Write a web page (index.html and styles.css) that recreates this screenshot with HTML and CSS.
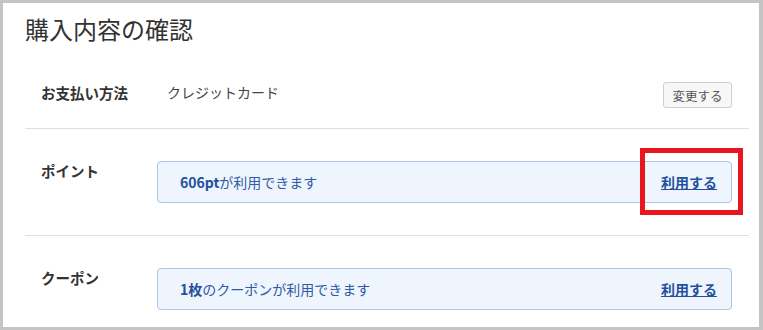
FILE: index.html
```html
<!DOCTYPE html>
<html lang="ja">
<head>
    <meta charset="UTF-8">
    <meta name="viewport" content="width=device-width, initial-scale=1.0">
    <title>購入内容の確認</title>
    <link rel="stylesheet" href="styles.css">
</head>
<body>
    <div class="panel">
        <h1 class="title">購入内容の確認</h1>

        <div class="row row-pay">
            <div class="label">お支払い方法</div>
            <div class="value">クレジットカード</div>
            <button class="btn-change" type="button">変更する</button>
        </div>

        <div class="row">
            <div class="label">ポイント</div>
            <div class="info-box">
                <span class="info-text"><b>606pt</b>が利用できます</span>
                <a href="#" class="use-link">利用する</a>
            </div>
        </div>

        <div class="row">
            <div class="label">クーポン</div>
            <div class="info-box">
                <span class="info-text"><b>1枚</b>のクーポンが利用できます</span>
                <a href="#" class="use-link">利用する</a>
            </div>
        </div>

        <!-- annotation around the point link -->
        <div class="highlight"></div>
    </div>
</body>
</html>
```

FILE: styles.css
```css
* {
    margin: 0;
    padding: 0;
    box-sizing: border-box;
}
body {
    font-family: "Noto Sans CJK JP", "Noto Sans", sans-serif;
    color: #333;
    background: #c4c4c4;
    width: 763px;
    height: 330px;
    overflow: hidden;
}
.panel {
    position: relative;
    width: 763px;
    height: 330px;
    background: #fff;
    border: 3px solid #c4c4c4;
    border-right-width: 4px;
}
.title {
    font-size: 24px;
    font-weight: normal;
    line-height: 34px;
    margin: 9px 0 0 22px;
    color: #333;
}
.row {
    display: flex;
    align-items: flex-start;
    margin: 0 10px 0 22px;
    padding: 32px 17px 32px 16px;
    border-top: 1px solid #dedede;
}
.row-pay {
    border-top: none;
    align-items: center;
    padding: 36px 17px 20px 16px;
}
.label {
    width: 116px;
    flex-shrink: 0;
    font-size: 14.5px;
    font-weight: bold;
    line-height: 20px;
    color: #333;
}
.row-pay .label {
    margin-top: -4px;
}
.value {
    flex: 1;
    font-size: 14px;
    line-height: 20px;
    margin: -7px 0 0 10px;
    color: #444;
}
.btn-change {
    width: 69px;
    height: 26px;
    font-family: inherit;
    font-size: 12.5px;
    color: #555;
    background: #f7f7f7;
    border: 1px solid #cfcfcf;
    border-radius: 3px;
}
.info-box {
    flex: 1;
    display: flex;
    justify-content: space-between;
    align-items: center;
    height: 42px;
    padding: 0 14px 0 22px;
    background: #eef5fd;
    border: 1px solid #a9c5ea;
    border-radius: 4px;
    font-size: 14px;
    color: #2e5aa7;
}
.row:last-of-type .info-box {
    height: 43px;
}
.info-text b {
    color: #24509d;
}
.use-link {
    font-weight: bold;
    color: #24509d;
    text-decoration: underline;
}
.highlight {
    position: absolute;
    left: 637px;
    top: 145px;
    width: 103px;
    height: 67px;
    border: 5px solid #e8161f;
}
```
